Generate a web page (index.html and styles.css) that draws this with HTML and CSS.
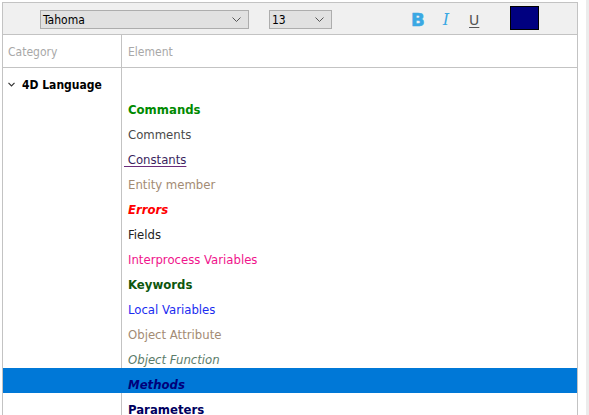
FILE: index.html
```html
<!DOCTYPE html>
<html>
<head>
<meta charset="utf-8">
<link rel="stylesheet" href="styles.css">
</head>
<body>
<div class="page">
  <div class="panel">
    <div class="toolbar">
      <div class="select font-select"><span>Tahoma</span><svg class="chev" width="9" height="5" viewBox="0 0 9 5"><polyline points="0.5,0.5 4.5,4.5 8.5,0.5" fill="none" stroke="#555" stroke-width="1"/></svg></div>
      <div class="select size-select"><span>13</span><svg class="chev" width="9" height="5" viewBox="0 0 9 5"><polyline points="0.5,0.5 4.5,4.5 8.5,0.5" fill="none" stroke="#555" stroke-width="1"/></svg></div>
      <span class="tb-btn tb-bold">B</span>
      <span class="tb-btn tb-italic">I</span>
      <span class="tb-btn tb-under">U</span>
      <span class="swatch"></span>
    </div>
    <div class="header">
      <div class="cat-cell head-text">Category</div>
      <div class="el-cell head-text">Element</div>
    </div>
    <div class="list">
      <div class="row">
        <div class="cat-cell group"><svg class="tree-chev" width="7" height="5" viewBox="0 0 7 5"><polyline points="0.5,0.8 3.5,3.8 6.5,0.8" fill="none" stroke="#333" stroke-width="1.2"/></svg>4D Language</div>
        <div class="el-cell"></div>
      </div>
      <div class="row"><div class="cat-cell"></div><div class="el-cell c-commands">Commands</div></div>
      <div class="row"><div class="cat-cell"></div><div class="el-cell c-comments">Comments</div></div>
      <div class="row"><div class="cat-cell"></div><div class="el-cell c-constants"><span class="ul"> Constants</span></div></div>
      <div class="row"><div class="cat-cell"></div><div class="el-cell c-entity">Entity member</div></div>
      <div class="row"><div class="cat-cell"></div><div class="el-cell c-errors">Errors</div></div>
      <div class="row"><div class="cat-cell"></div><div class="el-cell c-fields">Fields</div></div>
      <div class="row"><div class="cat-cell"></div><div class="el-cell c-inter">Interprocess Variables</div></div>
      <div class="row"><div class="cat-cell"></div><div class="el-cell c-keywords">Keywords</div></div>
      <div class="row"><div class="cat-cell"></div><div class="el-cell c-local">Local Variables</div></div>
      <div class="row"><div class="cat-cell"></div><div class="el-cell c-objattr">Object Attribute</div></div>
      <div class="row"><div class="cat-cell"></div><div class="el-cell c-objfunc">Object Function</div></div>
      <div class="row selected"><div class="cat-cell"></div><div class="el-cell c-methods">Methods</div></div>
      <div class="row"><div class="cat-cell"></div><div class="el-cell c-params">Parameters</div></div>
    </div>
  </div>
  <div class="scroll-strip"></div>
</div>
</body>
</html>
```

FILE: styles.css
```css
html, body {
  margin: 0;
  padding: 0;
  background: #ffffff;
  overflow: hidden;
}
body {
  font-family: "DejaVu Sans Condensed", "DejaVu Sans", sans-serif;
  font-size: 13px;
  color: #222;
}
.page {
  display: flex;
  align-items: flex-start;
  height: 415px;
  overflow: hidden;
}
.panel {
  margin: 2px 0 0 2px;
  width: 574px;
  border: 1px solid #c3c3c3;
  border-bottom: none;
  height: 420px;
  flex: none;
}
.scroll-strip {
  margin-left: 8px;
  width: 3px;
  height: 415px;
  background: #ececec;
  flex: none;
}
.toolbar {
  height: 31px;
  background: #f0f0f0;
  border-bottom: 1px solid #c3c3c3;
  display: flex;
  align-items: flex-start;
  box-sizing: content-box;
}
.select {
  margin-top: 7px;
  height: 19px;
  box-sizing: border-box;
  background: #e1e1e1;
  border: 1px solid #adadad;
  display: flex;
  align-items: center;
  justify-content: space-between;
  padding: 0 7px 0 2px;
  font-size: 12px;
  color: #000;
}
.font-select {
  margin-left: 37px;
  width: 209px;
}
.size-select {
  margin-left: 20px;
  width: 63px;
}
.chev {
  display: block;
}
.tb-btn {
  margin-top: 8px;
  line-height: 18px;
  font-size: 16px;
}
.tb-bold {
  margin-left: 79px;
  font-family: "DejaVu Sans", sans-serif;
  font-weight: 900;
  color: #3aa8e3;
  font-size: 18px;
  -webkit-text-stroke: 0.6px #3aa8e3;
}
.tb-italic {
  margin-left: 18px;
  font-family: "DejaVu Serif", serif;
  font-style: italic;
  font-size: 16px;
  color: #3aa8e3;
}
.tb-under {
  margin-left: 20px;
  font-family: "DejaVu Sans", sans-serif;
  font-size: 14px;
  color: #555;
  text-decoration: underline;
  text-underline-offset: 2px;
}
.swatch {
  margin-left: 31px;
  margin-top: 3px;
  width: 29px;
  height: 24px;
  box-sizing: border-box;
  background: #000080;
  border: 1px solid #000;
}
.header {
  display: flex;
  height: 32px;
  border-bottom: 1px solid #c3c3c3;
}
.head-text {
  color: #a8a8a8;
  font-size: 12px;
  line-height: 29px;
  padding-top: 3px;
  box-sizing: border-box;
}
.cat-cell {
  width: 118px;
  flex: none;
  border-right: 1px solid #c3c3c3;
  padding-left: 5px;
  box-sizing: content-box;
}
.head-text.cat-cell {
  width: 113px;
}
.el-cell {
  flex: 1;
  padding-left: 6px;
  white-space: pre;
}
.row {
  display: flex;
  height: 25px;
}
.row .cat-cell, .row .el-cell {
  padding-top: 8px;
  line-height: 17px;
  box-sizing: border-box;
  height: 25px;
}
.list .row .cat-cell {
  width: 119px;
}
.row.selected {
  background: #0078d7;
}
.row.selected .cat-cell {
  border-right-color: #0078d7;
}
.group {
  font-weight: bold;
  font-size: 12px;
  color: #000;
  display: flex;
  align-items: center;
  padding-top: 10px !important;
}
.tree-chev {
  margin: 0 7px 3px 0;
}
.c-commands { color: #008a00; font-weight: bold; }
.c-comments { color: #4a4a4a; }
.c-constants { color: #3a1f5e; }
.c-constants .ul { text-decoration: underline; text-decoration-color: #6a2a7a; text-underline-offset: 2px; margin-left: -4px; }
.c-entity { color: #a38b74; }
.c-errors { color: #ff0000; font-weight: bold; font-style: italic; }
.c-fields { color: #222; }
.c-inter { color: #f0148c; }
.c-keywords { color: #0d560d; font-weight: bold; }
.c-local { color: #1c2cf0; }
.c-objattr { color: #a38b74; }
.c-objfunc { color: #5b7c6a; font-style: italic; }
.c-methods { color: #00007a; font-weight: bold; font-style: italic; }
.c-params { color: #000060; font-weight: bold; }
```
